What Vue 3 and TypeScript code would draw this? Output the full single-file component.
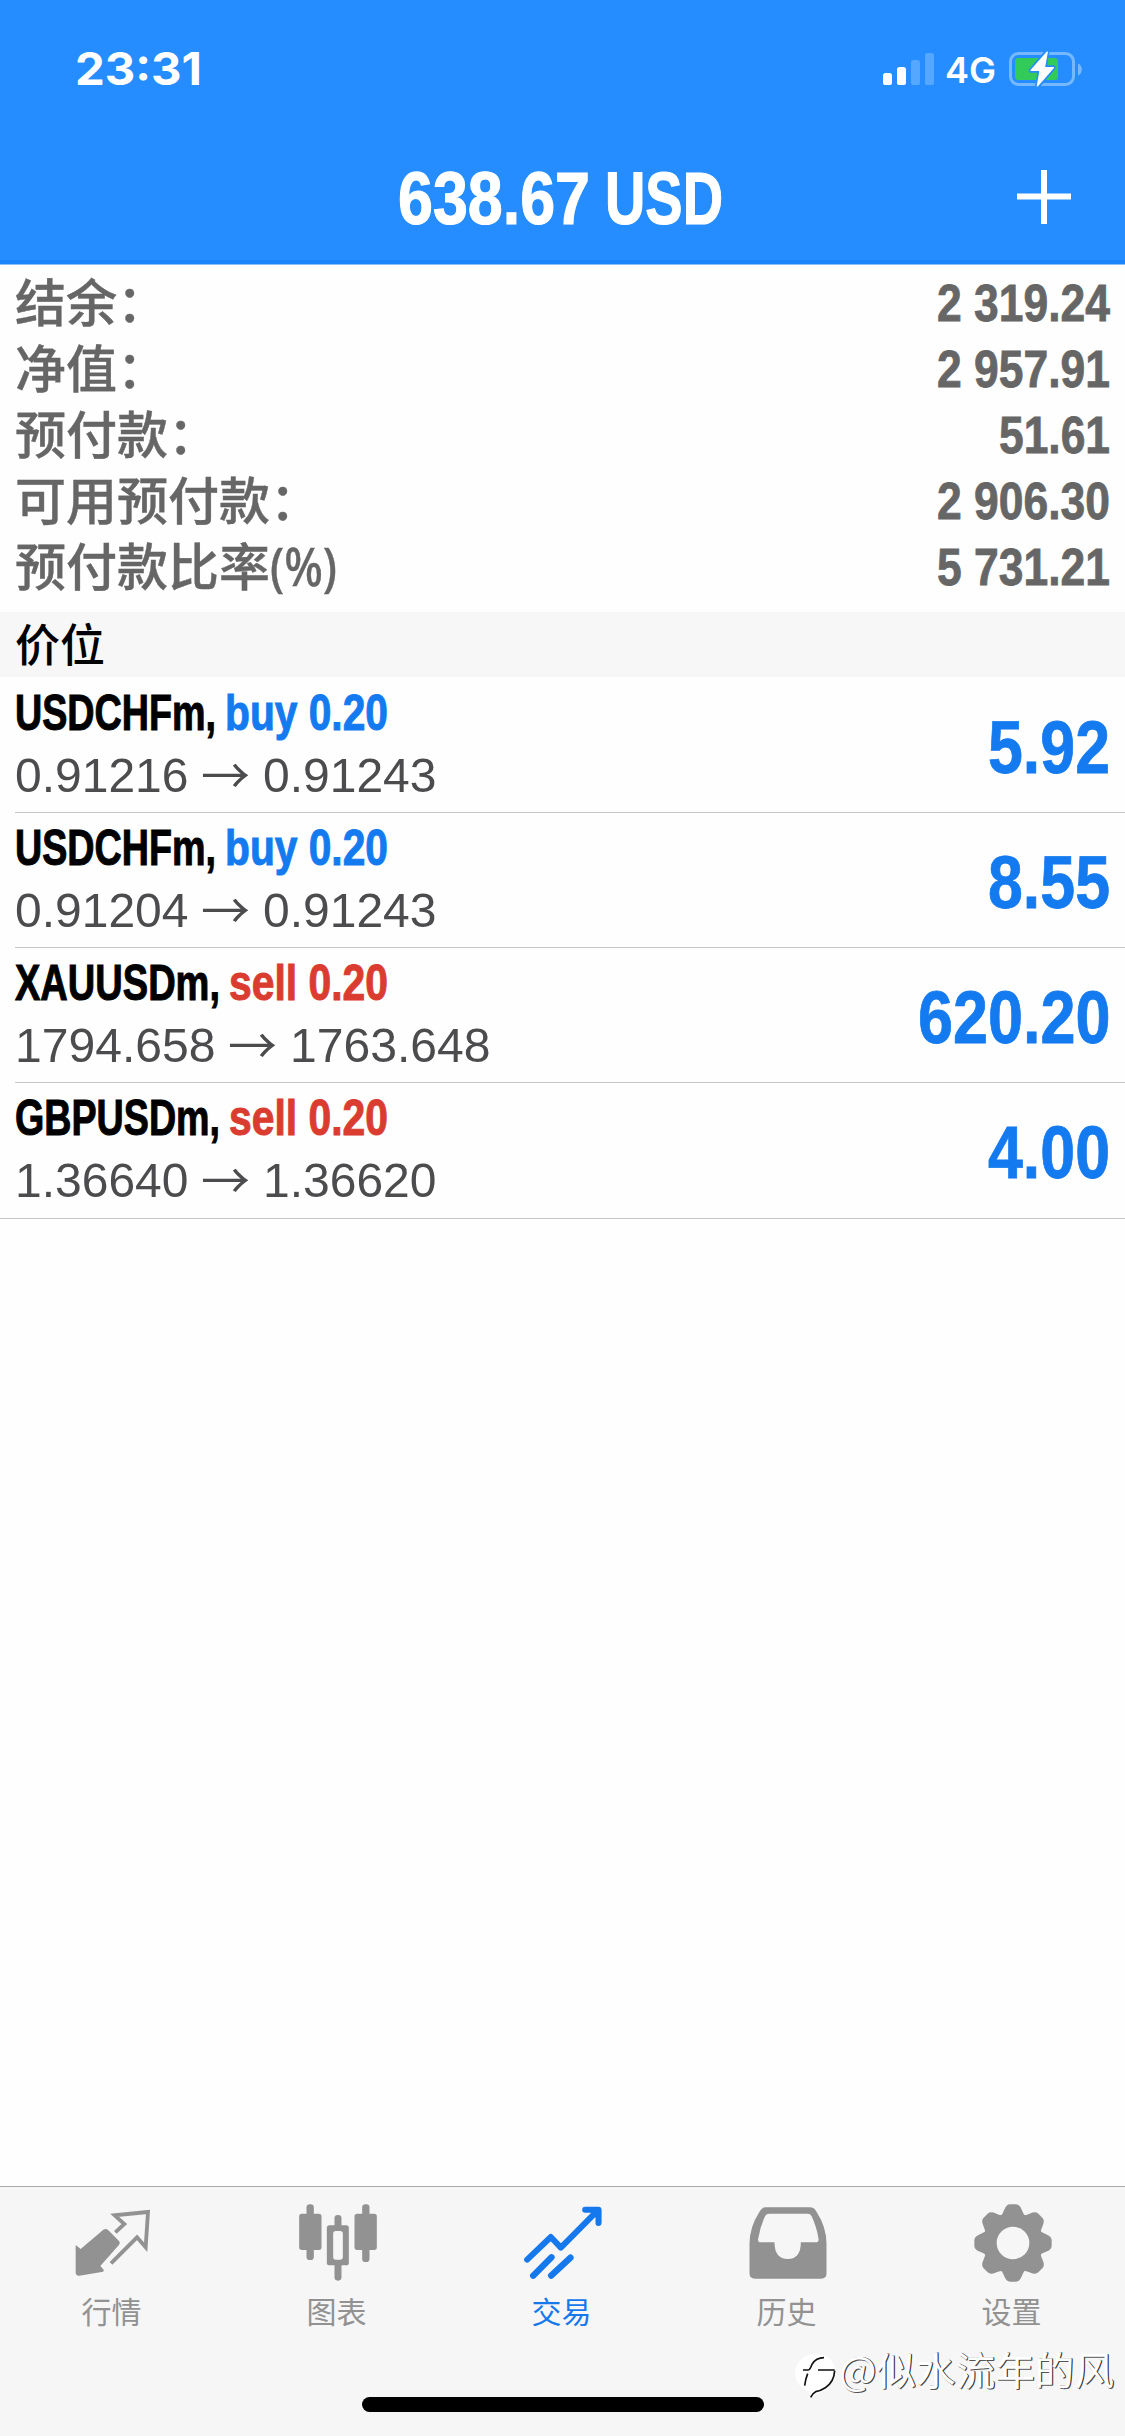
<script setup lang="ts">
import type { Directive } from 'vue'

interface SummaryRow { label: string; suffix?: string; value: string; width: number }
interface Position {
  symbol: string
  symbolWidth: number
  side: 'buy' | 'sell'
  volume: string
  sideWidth: number
  open: string
  current: string
  priceWidth: number
  profit: string
  profitWidth: number
}

// Condenses or widens a label horizontally so that it takes the given width.
const vFit: Directive<HTMLElement, number> = {
  mounted(el, binding) {
    const natural = el.getBoundingClientRect().width
    el.style.transform = `scaleX(${binding.value / natural})`
    el.style.marginRight = `${binding.value - natural}px`
  },
}

const summary: SummaryRow[] = [
  { label: '结余：', value: '2 319.24', width: 173 },
  { label: '净值：', value: '2 957.91', width: 173 },
  { label: '预付款：', value: '51.61', width: 111 },
  { label: '可用预付款：', value: '2 906.30', width: 173 },
  { label: '预付款比率', suffix: '(%)', value: '5 731.21', width: 173 },
]

const positions: Position[] = [
  { symbol: 'USDCHFm,', symbolWidth: 201, side: 'buy', volume: '0.20', sideWidth: 163, open: '0.91216', current: '0.91243', priceWidth: 173.5, profit: '5.92', profitWidth: 122 },
  { symbol: 'USDCHFm,', symbolWidth: 201, side: 'buy', volume: '0.20', sideWidth: 163, open: '0.91204', current: '0.91243', priceWidth: 173.5, profit: '8.55', profitWidth: 122 },
  { symbol: 'XAUUSDm,', symbolWidth: 205, side: 'sell', volume: '0.20', sideWidth: 159, open: '1794.658', current: '1763.648', priceWidth: 200.5, profit: '620.20', profitWidth: 192.5 },
  { symbol: 'GBPUSDm,', symbolWidth: 205, side: 'sell', volume: '0.20', sideWidth: 159, open: '1.36640', current: '1.36620', priceWidth: 173.5, profit: '4.00', profitWidth: 122 },
]
</script>

<template>
  <div class="screen">
    <header class="header">
      <div class="status">
        <span v-fit="127" class="clock">23:31</span>
        <div class="indicators">
          <svg class="signal" width="52" height="34" viewBox="0 0 52 34">
            <rect x="0" y="21" width="9" height="12" rx="2.600" fill="#fff" />
            <rect x="14" y="15" width="9" height="18" rx="2.600" fill="#fff" />
            <rect x="28" y="8" width="9" height="25" rx="2.600" fill="#55a7ff" />
            <rect x="42" y="1" width="9" height="32" rx="2.600" fill="#55a7ff" />
          </svg>
          <span v-fit="51" class="network">4G</span>
          <svg class="battery" width="76" height="38" viewBox="1008 50 76 38">
            <rect x="1010.500" y="53.500" width="63" height="31" rx="8" fill="none" stroke="#76b8ff" stroke-width="3" />
            <rect x="1015" y="58" width="43" height="22" rx="3.500" fill="#32cb59" />
            <path d="M1078 63.500c5.200 2 5.200 10 0 12z" fill="#76b8ff" />
            <path d="M1047.300 51.500L1031 70.500H1040L1037.300 86.500L1053.500 67.500H1044.500Z" fill="#258dff" stroke="#258dff" stroke-width="4.500" stroke-linejoin="round" />
            <path d="M1047.300 52L1031 70.500H1040L1037.300 86L1053.500 67.500H1044.500Z" fill="#fff" stroke="#fff" stroke-width="1.200" stroke-linejoin="round" />
          </svg>
        </div>
      </div>
      <div class="navbar">
        <h1 class="title"><span v-fit="192">638.67</span> <span v-fit="118">USD</span></h1>
        <svg class="add" width="54" height="54" viewBox="0 0 54 54">
          <path d="M0 26.500h54M27 0v54" stroke="#fff" stroke-width="6" />
        </svg>
      </div>
    </header>

    <main class="content">
      <dl class="summary">
        <div v-for="row in summary" :key="row.label" class="summary-row">
          <dt>{{ row.label }}<span v-if="row.suffix" v-fit="67" class="suffix">{{ row.suffix }}</span></dt>
          <dd v-fit="row.width">{{ row.value }}</dd>
        </div>
      </dl>

      <h2 class="section">价位</h2>

      <ul class="positions">
        <li v-for="(p, i) in positions" :key="i" class="position">
          <div class="details">
            <div class="deal">
              <span v-fit="p.symbolWidth" class="symbol">{{ p.symbol }}</span>
              <span v-fit="p.sideWidth" class="side" :class="p.side">{{ p.side }} {{ p.volume }}</span>
            </div>
            <div class="prices">
              <span v-fit="p.priceWidth" class="price">{{ p.open }}</span>
              <span v-fit="49" class="arrow">→</span>
              <span v-fit="p.priceWidth" class="price">{{ p.current }}</span>
            </div>
          </div>
          <span v-fit="p.profitWidth" class="profit">{{ p.profit }}</span>
        </li>
      </ul>
    </main>

    <footer class="footer">
      <nav class="tabs">
        <a class="tab">
          <svg viewBox="202 85 270 270">
            <path d="M225 226L240 238L308 180Q316 175 323 182L355 214Q360 220 354 227L299 289L309 300Q311 305 303 307L236 318Q225 319 225 308Z" fill="currentColor" />
            <path d="M344 188L371 163L342 137L442 127L435 233L409 203L331 281" fill="none" stroke="currentColor" stroke-width="11.500" />
          </svg>
          <span>行情</span>
        </a>
        <a class="tab">
          <svg viewBox="877.500 85 270 270">
            <g fill="currentColor">
              <rect x="918" y="104" width="22" height="167" rx="10" />
              <rect x="896" y="132" width="67" height="109" rx="8" />
              <rect x="1085" y="104" width="22" height="173" rx="10" />
              <rect x="1062" y="132" width="67" height="109" rx="8" />
              <rect x="1002" y="136" width="21" height="197" rx="10" />
              <rect x="979" y="167" width="66" height="120" rx="8" />
            </g>
            <rect x="998" y="184" width="29" height="86" rx="8" fill="#f6f6f6" />
          </svg>
          <span>图表</span>
        </a>
        <a class="tab active">
          <svg viewBox="352.500 85 270 270">
            <g fill="none" stroke="currentColor" stroke-width="18" stroke-linecap="round" stroke-linejoin="round">
              <path d="M380 270L451 202L481 234L591 123" />
              <path d="M554 120H594V160" />
            </g>
            <g fill="none" stroke="currentColor" stroke-width="19" stroke-linecap="round">
              <path d="M398 318L453 263" />
              <path d="M452 318L510 264" />
            </g>
            <path d="M562 120H602V160Z" fill="currentColor" />
          </svg>
          <span>交易</span>
        </a>
        <a class="tab">
          <svg viewBox="52.500 85 270 270">
            <path fill="currentColor" fill-rule="evenodd" d="M121 113H253Q266 113 273 126Q303 172 303 222V311Q303 327 287 327H88Q72 327 72 311V222Q72 172 102 126Q109 113 121 113ZM131 132Q123 132 119 139Q105 168 98 207Q96 218 106 218H147Q147 268 187 268Q226 268 226 218H269Q281 218 279 207Q273 170 258 139Q254 132 247 132Z" />
          </svg>
          <span>历史</span>
        </a>
        <a class="tab">
          <svg viewBox="727.500 85 270 270">
            <g fill="currentColor">
              <circle cx="862.500" cy="220" r="89" />
              <path v-for="n in 8" :key="n" :transform="`rotate(${n * 45} 862.5 220)`" d="M822 143Q832 134 836 121Q842 104 854 104H871Q883 104 889 121Q893 134 903 143Z" />
            </g>
            <circle cx="862.500" cy="220" r="49" fill="#f6f6f6" />
          </svg>
          <span>设置</span>
        </a>
      </nav>
      <div class="home-indicator"></div>
    </footer>

    <div class="watermark">
      <svg width="44" height="52" viewBox="33 42 132 156">
        <path d="M98 58A54 54 0 1 0 82 170Q80 180 76 190Q92 184 96 178Q150 162 153 106Q148 60 98 58Z" fill="#fff" />
        <path d="M120 68Q96 68 84 88Q78 105 73 105H57M102 105H152M71 116Q64 134 62 152" fill="none" stroke="#111" stroke-width="5" />
        <path d="M152 107Q150 142 124 158Q108 168 95 170Q86 174 80 187" fill="none" stroke="#111" stroke-width="5" />
      </svg>
      <span v-fit="275">@似水流年的风</span>
    </div>
  </div>
</template>

<style>
html,
body {
  margin: 0;
  background: #fff;
}
</style>

<style scoped>
.screen {
  position: relative;
  display: flex;
  flex-direction: column;
  width: 1125px;
  height: 2436px;
  overflow: hidden;
  background: #fefefe;
  font-family: "Liberation Sans", "Noto Sans CJK SC", sans-serif;
}
[class] {
  box-sizing: border-box;
}
.clock, .network, .title span, .summary dd, .suffix, .symbol, .side, .price, .arrow, .profit, .watermark span {
  display: inline-block;
  flex: none;
  transform-origin: 0 50%;
  white-space: pre;
}
.header {
  height: 265px;
  background: #258dff;
  border-bottom: 1px solid #8fc0f5;
  box-shadow: inset 0 -4px 0 #1b85fc;
  color: #fff;
}
.status {
  display: flex;
  justify-content: space-between;
  height: 132px;
  padding: 0 41px 0 75px;
}
.clock {
  align-self: flex-start;
  margin-top: 40px;
  font: 700 45px/57px Inter, sans-serif;
}
.indicators {
  display: flex;
  align-items: flex-start;
}
.signal {
  margin-top: 52px;
  margin-right: 10px;
}
.network {
  margin-top: 48px;
  font: 600 35.500px/46px Inter, sans-serif;
}
.battery {
  margin-top: 50px;
  margin-left: 12px;
}
.navbar {
  display: flex;
  justify-content: space-between;
  padding: 0 54px 0 398px;
}
.title {
  display: flex;
  gap: 15px;
  margin: 20px 0 0;
  font-size: 75px;
  line-height: 92px;
  font-weight: 700;
  -webkit-text-stroke: 1.200px currentColor;
}
.add {
  margin-top: 38px;
}
.content {
  flex: 1;
}
.summary {
  margin: 0;
  height: 347px;
  padding: 5px 15px 0;
  color: #666;
}
.summary-row {
  display: flex;
  justify-content: space-between;
  height: 66px;
}
.summary dt {
  height: 66px;
  padding-top: 1px;
  box-sizing: border-box;
  font: 500 51px/68px "Liberation Sans", "Noto Sans CJK SC", sans-serif;
  -webkit-text-stroke: 0.400px currentColor;
}
.summary .suffix {
  font: 500 52px/60px "Noto Sans", sans-serif;
}
.summary dd {
  margin: 0;
  padding-top: 3px;
  font-size: 51px;
  line-height: 62px;
  font-weight: 700;
  -webkit-text-stroke: 0.800px currentColor;
}
.section {
  margin: 0;
  height: 65px;
  padding-left: 15px;
  background: #f7f7f7;
  color: #000;
  font: 500 45px/69px "Liberation Sans", "Noto Sans CJK SC", sans-serif;
}
.positions {
  margin: 0;
  padding: 1px 0 0;
  list-style: none;
  border-bottom: 1px solid #c8c8ca;
}
.position {
  display: flex;
  justify-content: space-between;
  box-sizing: border-box;
  height: 135px;
  margin-left: 15px;
  padding-right: 15px;
  border-bottom: 1px solid #c8c8ca;
}
.position:last-child {
  border-bottom: 0;
}
.deal {
  display: flex;
  gap: 9px;
  height: 70px;
  padding-top: 6px;
  font-size: 50px;
  line-height: 58px;
  font-weight: 700;
  -webkit-text-stroke: 1px currentColor;
}
.symbol {
  color: #000;
}
.buy {
  color: #147aef;
}
.sell {
  color: #db3c30;
}
.prices {
  display: flex;
  gap: 13px;
  height: 54px;
  color: #4c4c4e;
  font-size: 49px;
  line-height: 54px;
}
.arrow {
  margin-top: -2px;
  margin-left: -1px;
  font-family: "Noto Sans CJK SC", sans-serif;
}
.profit {
  height: 120px;
  color: #147aef;
  font-size: 74px;
  line-height: 80px;
  padding-top: 30px;
  font-weight: 700;
  -webkit-text-stroke: 0.800px currentColor;
}
.footer {
  height: 250px;
  border-top: 1px solid #a9a9a9;
  background: #f6f6f6;
}
.tabs {
  display: flex;
  height: 210px;
  color: #929292;
}
.tab {
  display: flex;
  flex: 1;
  flex-direction: column;
  align-items: center;
  padding-top: 11px;
  font: 400 30px/44px "Noto Sans CJK SC", sans-serif;
}
.tab svg {
  width: 90px;
  height: 90px;
}
.tab span {
  margin-right: 2px;
}
.tab.active {
  color: #1678ed;
}
.home-indicator {
  width: 402px;
  height: 15px;
  margin: 0 auto;
  border-radius: 8px;
  background: #000;
}
.watermark {
  position: absolute;
  left: 795px;
  top: 2349px;
  display: flex;
  align-items: flex-start;
  color: #fff;
  font: 400 39px/44px "Noto Sans CJK SC", sans-serif;
  text-shadow: 1px 0 0 #333, 1px 1px 0 #555;
}
.watermark span {
  margin-top: -3px;
}
</style>
